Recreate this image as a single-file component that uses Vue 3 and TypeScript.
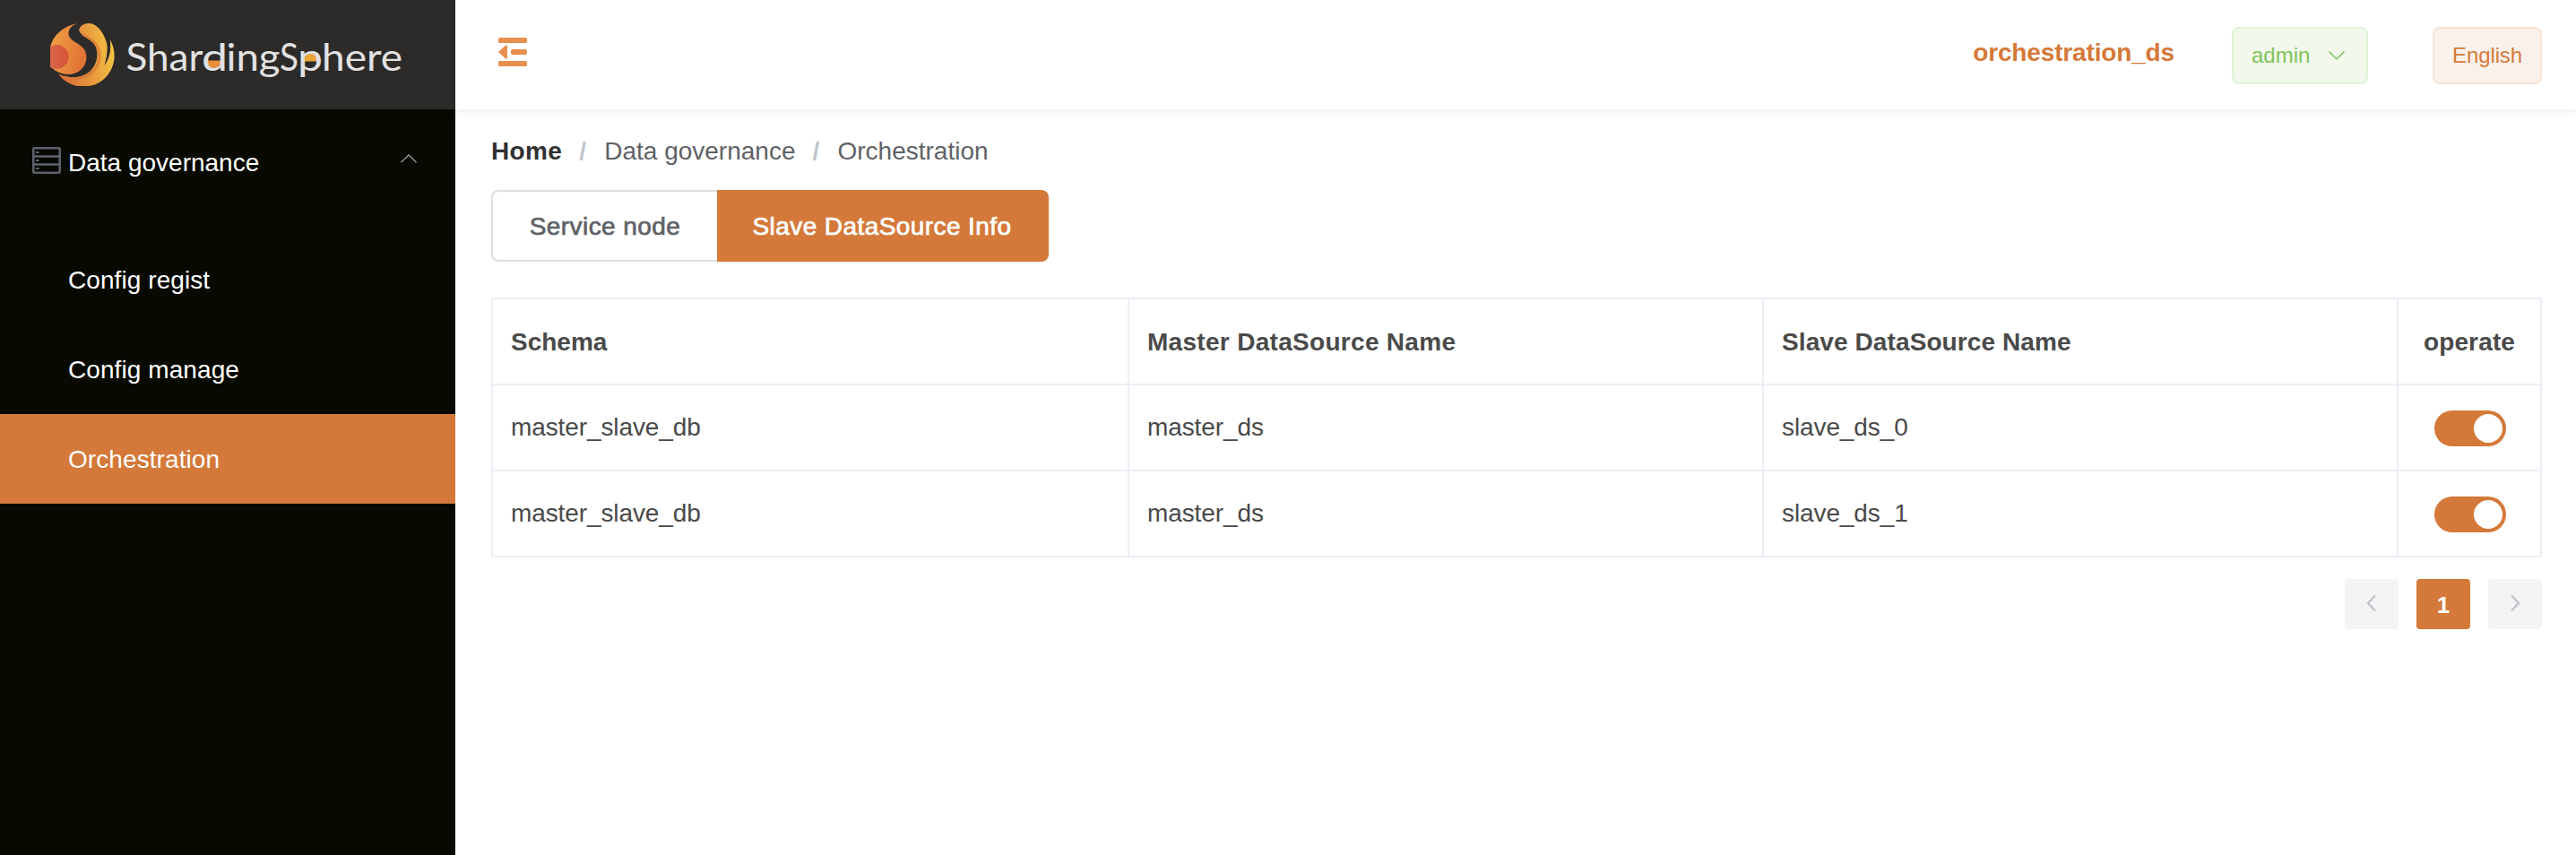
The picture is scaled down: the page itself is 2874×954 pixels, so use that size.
<script setup lang="ts">
import { ref } from 'vue'

interface DataSourceRow {
  schema: string
  master: string
  slave: string
  enabled: boolean
}

const menu: string[] = ['Config regist', 'Config manage', 'Orchestration']
const activeMenu = ref('Orchestration')
const activeTab = ref('slave')
const rows = ref<DataSourceRow[]>([
  { schema: 'master_slave_db', master: 'master_ds', slave: 'slave_ds_0', enabled: true },
  { schema: 'master_slave_db', master: 'master_ds', slave: 'slave_ds_1', enabled: true },
])
</script>

<template>
  <div class="layout">
    <aside class="sidebar">
      <div class="logo">
        <svg width="392" height="70" viewBox="56 26 392 70">
          <defs>
            <linearGradient id="core" x1="0" y1="0" x2="1" y2="0.3">
              <stop offset="0" stop-color="#f0a445" />
              <stop offset="1" stop-color="#e27436" />
            </linearGradient>
            <linearGradient id="ring" x1="0" y1="0.6" x2="1" y2="0.4">
              <stop offset="0" stop-color="#d8703a" />
              <stop offset="0.55" stop-color="#e79a3e" />
              <stop offset="1" stop-color="#f4c643" />
            </linearGradient>
            <linearGradient id="red" x1="0" y1="0" x2="1" y2="0">
              <stop offset="0" stop-color="#dc6c4e" />
              <stop offset="1" stop-color="#d45336" />
            </linearGradient>
          </defs>
          <path fill="url(#core)" d="M87 26C70 29 57 41 56 55V73C60 79 67 82.500 76 83C88 83 96 75 96.500 64C96.500 54 89 50 83 46.500C77 43 75 38 77.500 33C79.500 29 83 27.500 87 26Z" />
          <circle cx="63" cy="63.500" r="13.500" fill="url(#red)" />
          <path fill="url(#ring)" d="M88 33.500C89 29 93 26 100 26C109 27 116 37 119 48C121 57 119 64 117 72C122 63 124 55 122.500 44C127 51 128 59 127.500 65C126 80 116 93 100 96H86C76 94 69 88 65 82.500C77 88 91 88 101 79C109 71 111 58 105 49C100 42 90 41 88 33.500Z" />
          <path fill="none" stroke="#da783a" stroke-width="3" stroke-opacity=".75" d="M92 38.500C100 42 108 47 110.500 57C113 68 107 79 98 84C91 88 81 89 72 86" />
          <path fill="#2d2b29" d="M117 37C121 47 121 59 116.500 73C122 65 124.500 57 122.500 43C121 54 121 58 120 61C120.500 52 119.500 44 117 37Z" />
          <path fill="#e9903b" d="M230 67.500H247.500A8.700 8.500 0 0 1 230 67.500Z" />
          <path fill="#eba435" d="M338.500 68.500H356A8.700 8.700 0 0 0 338.500 68.500Z" />
          <text class="brand" y="78.500"><tspan x="140.500" textLength="86" lengthAdjust="spacingAndGlyphs">Shar</tspan><tspan x="225" textLength="29" lengthAdjust="spacingAndGlyphs">d</tspan><tspan x="252.500" textLength="60" lengthAdjust="spacingAndGlyphs">ing</tspan><tspan x="312" textLength="21" lengthAdjust="spacingAndGlyphs">S</tspan><tspan x="332" textLength="28" lengthAdjust="spacingAndGlyphs">p</tspan><tspan x="359" textLength="90" lengthAdjust="spacingAndGlyphs">here</tspan></text>
        </svg>
      </div>
      <nav class="menu">
        <div class="submenu">
          <svg class="server" width="32" height="30" viewBox="0 0 32 30" fill="none" stroke="#5c636b" stroke-width="2.600">
            <rect x="1.300" y="1.300" width="29.400" height="27.400" rx="1" />
            <path d="M1 10.500H31M1 19.500H31" />
            <path d="M4 6H7.500M4 15H7.500M4 24H7.500" stroke-width="2" />
          </svg>
          <span>Data governance</span>
          <svg class="fold" width="18" height="10" viewBox="0 0 18 10" fill="none" stroke="#909399" stroke-width="1.400">
            <path d="M.500 9.300L9 .900L17.500 9.300" />
          </svg>
        </div>
        <div
          v-for="item in menu"
          :key="item"
          class="item"
          :class="{ active: item === activeMenu }"
          @click="activeMenu = item"
        >{{ item }}</div>
      </nav>
    </aside>

    <div class="main">
      <header class="header">
        <svg width="32" height="32" viewBox="0 0 32 32" fill="#e78f4e">
          <rect width="32" height="6" rx="1.500" />
          <rect y="26" width="32" height="6" rx="1.500" />
          <rect x="14" y="13" width="18" height="6" rx="2" />
          <path d="M0 16L8 8.500Q10 7.500 10 9.500V22.500Q10 24.500 8 23.500Z" />
        </svg>
        <strong class="registry">orchestration_ds</strong>
        <div class="tag user">
          <span>admin</span>
          <svg width="20" height="12" viewBox="0 0 20 12" fill="none" stroke="#7fc45b" stroke-width="1.500">
            <path d="M1.500 1.500L10 10L18.500 1.500" />
          </svg>
        </div>
        <div class="tag lang">English</div>
      </header>

      <section class="content">
        <div class="breadcrumb">
          <strong>Home</strong><i>/</i><span>Data governance</span><i>/</i><span>Orchestration</span>
        </div>

        <div class="tabs">
          <div class="tab first" :class="{ on: activeTab === 'node' }" @click="activeTab = 'node'">Service node</div>
          <div class="tab" :class="{ on: activeTab === 'slave' }" @click="activeTab = 'slave'">Slave DataSource Info</div>
        </div>

        <div class="table">
          <div class="row head">
            <div class="cell">Schema</div>
            <div class="cell wide">Master DataSource Name</div>
            <div class="cell slave">Slave DataSource Name</div>
            <div class="cell op">operate</div>
          </div>
          <div v-for="row in rows" :key="row.slave" class="row">
            <div class="cell">{{ row.schema }}</div>
            <div class="cell">{{ row.master }}</div>
            <div class="cell">{{ row.slave }}</div>
            <div class="cell op">
              <div class="switch" :class="{ off: !row.enabled }" @click="row.enabled = !row.enabled"><b></b></div>
            </div>
          </div>
        </div>

        <div class="pagination">
          <div class="page">
            <svg width="12" height="20" viewBox="0 0 12 20"><path d="M10 1.500L2 10L10 18.500" /></svg>
          </div>
          <div class="page current">1</div>
          <div class="page">
            <svg width="12" height="20" viewBox="0 0 12 20"><path d="M2 1.500L10 10L2 18.500" /></svg>
          </div>
        </div>
      </section>
    </div>
  </div>
</template>

<style>
body {
  margin: 0;
  background: #fff;
}
</style>

<style scoped>
.layout {
  display: flex;
  width: 100%;
  height: 954px;
  font-family: 'Liberation Sans', Arial, sans-serif;
  font-size: 28px;
  box-sizing: border-box;
}
.layout * {
  box-sizing: border-box;
}
svg {
  display: block;
  flex: none;
}
.sidebar {
  width: 508px;
  flex: none;
  background: #080900;
  color: #fff;
}
.logo {
  height: 122px;
  padding: 26px 0 0 56px;
  background: #2d2b29;
}
.brand {
  font-family: Lato, sans-serif;
  font-size: 42px;
  fill: #e2e2e2;
}
.submenu {
  display: flex;
  align-items: center;
  height: 140px;
  padding: 0 43px 20px 36px;
}
.server {
  margin-right: 8px;
  margin-bottom: 6px;
}
.fold {
  margin-left: auto;
  margin-bottom: 10px;
}
.item {
  height: 100px;
  padding-left: 76px;
  line-height: 102px;
  letter-spacing: 0.08px;
}
.item.active {
  background: #d4793a;
}
.main {
  flex: 1;
  min-width: 0;
}
.header {
  display: flex;
  align-items: center;
  height: 122px;
  padding: 0 38px 0 48px;
  box-shadow: 0 2px 8px rgba(0, 40, 30, 0.09);
}
.header > svg {
  margin-bottom: 6px;
}
.registry {
  margin-left: auto;
  margin-right: 64px;
  margin-bottom: 4px;
  color: #d4793a;
  letter-spacing: -0.15px;
}
.tag {
  display: flex;
  align-items: center;
  height: 64px;
  margin-top: 2px;
  padding: 0 20px;
  border: 2px solid;
  border-radius: 8px;
  font-size: 24px;
}
.user {
  width: 152px;
  margin-right: 72px;
  color: #7fc45b;
  background: #f2f8ec;
  border-color: #e1f3d8;
}
.user svg {
  margin-left: 20px;
}
.lang {
  width: 122px;
  color: #d4793a;
  background: #fbf1eb;
  border-color: #f6e4d7;
  letter-spacing: -0.1px;
}
.content {
  padding: 31px 38px 0 40px;
}
.breadcrumb {
  display: flex;
  height: 32px;
  margin-bottom: 27px;
  line-height: 32px;
  color: #606266;
}
.breadcrumb strong {
  color: #303133;
  letter-spacing: 0.35px;
}
.breadcrumb i {
  width: 8px;
  margin: 0 20px 0 19px;
  font-style: normal;
  font-weight: 700;
  color: #c0c4cc;
}
.tabs {
  display: flex;
  width: 622px;
  height: 80px;
  margin-bottom: 40px;
  color: #606266;
  line-height: 78px;
  text-align: center;
  letter-spacing: 0.42px;
  -webkit-text-stroke: 0.7px currentColor;
}
.tab {
  flex: 1;
  border: 2px solid #dcdfe6;
  border-left: 0;
  border-radius: 0 8px 8px 0;
  white-space: nowrap;
}
.tab.first {
  flex: 0 0 252px;
  border-left: 2px solid #dcdfe6;
  border-right: 0;
  border-radius: 8px 0 0 8px;
}
.tab.on {
  color: #fff;
  background: #d4793a;
  border-color: #d4793a;
}
.table {
  border: 2px solid #ebeef5;
  border-bottom: 0;
  color: #4a4a4a;
}
.row {
  display: grid;
  grid-template-columns: 710px 708px 708px 1fr;
  height: 96px;
  border-bottom: 2px solid #ebeef5;
}
.cell {
  padding-left: 20px;
  line-height: 94px;
  letter-spacing: -0.1px;
  border-right: 2px solid #ebeef5;
}
.head {
  font-weight: 700;
}
.head .cell {
  line-height: 96px;
  letter-spacing: 0;
}
.head .wide {
  letter-spacing: 0.3px;
}
.head .slave {
  letter-spacing: 0.1px;
}
.cell.op {
  display: flex;
  align-items: center;
  justify-content: center;
  padding: 0;
  border: 0;
}
.head .cell.op {
  letter-spacing: 0.15px;
}
.switch {
  display: flex;
  justify-content: flex-end;
  width: 80px;
  height: 40px;
  margin-top: 2px;
  margin-left: 2px;
  padding: 4px;
  border-radius: 20px;
  background: #d4793a;
}
.switch.off {
  justify-content: flex-start;
  background: #dcdfe6;
}
.switch b {
  width: 32px;
  height: 32px;
  border-radius: 50%;
  background: #fff;
}
.pagination {
  display: flex;
  justify-content: flex-end;
  gap: 20px;
  margin-top: 24px;
}
.page {
  display: flex;
  align-items: center;
  justify-content: center;
  width: 60px;
  height: 56px;
  border-radius: 4px;
  background: #f4f4f5;
}
.page svg {
  margin-bottom: 3px;
  fill: none;
  stroke: #c0c4cc;
  stroke-width: 2.5;
}
.current {
  padding-top: 2px;
  background: #d4793a;
  color: #fff;
  font-size: 26px;
  font-weight: 700;
}
</style>
